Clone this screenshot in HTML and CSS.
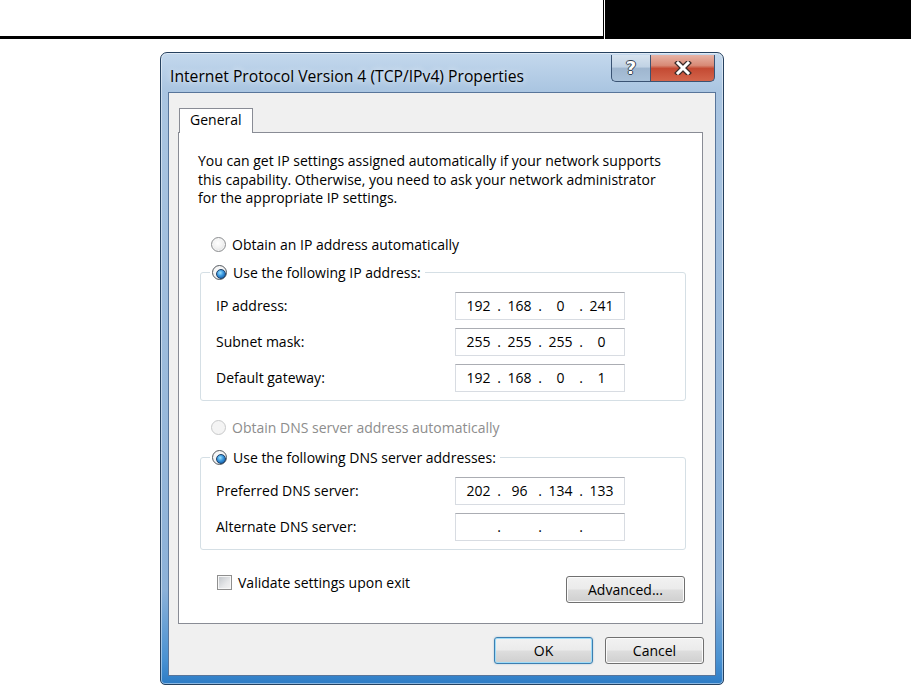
FILE: index.html
```html
<!DOCTYPE html>
<html lang="en">
<head>
    <meta charset="UTF-8">
    <title>Internet Protocol Version 4 (TCP/IPv4) Properties</title>
    <link rel="stylesheet" href="styles.css">
</head>
<body>
    <!-- Page header band of the manual -->
    <div class="doc-head">
        <div class="doc-rule"></div>
        <div class="doc-tab"></div>
    </div>

    <!-- Dialog window -->
    <div class="window">
        <div class="titlebar">
            <span class="title">Internet Protocol Version 4 (TCP/IPv4) Properties</span>
            <div class="caption-btns">
                <span class="cap cap-help">?</span>
                <span class="cap cap-close">
                    <svg width="18" height="14" viewBox="0 0 18 14">
                        <path d="M4 2 L14 12 M14 2 L4 12" stroke="#3a2a28" stroke-width="5.5" stroke-linecap="square"/>
                        <path d="M4 2 L14 12 M14 2 L4 12" stroke="#fff" stroke-width="3" stroke-linecap="square"/>
                    </svg>
                </span>
            </div>
        </div>

        <div class="client">
            <div class="tabs">
                <div class="tab">General</div>
            </div>

            <div class="panel">
                <p class="intro">You can get IP settings assigned automatically if your network supports
                    this capability. Otherwise, you need to ask your network administrator
                    for the appropriate IP settings.</p>

                <label class="option first">
                    <span class="radio"></span>Obtain an IP address automatically
                </label>

                <fieldset class="group group-ip">
                    <legend><span class="radio on"></span>Use the following IP address:</legend>
                    <div class="field-row">
                        <span class="field-label">IP address:</span>
                        <div class="ipbox"><span class="oct">192</span><span class="dot">.</span><span class="oct">168</span><span class="dot">.</span><span class="oct">0</span><span class="dot">.</span><span class="oct">241</span></div>
                    </div>
                    <div class="field-row">
                        <span class="field-label">Subnet mask:</span>
                        <div class="ipbox"><span class="oct">255</span><span class="dot">.</span><span class="oct">255</span><span class="dot">.</span><span class="oct">255</span><span class="dot">.</span><span class="oct">0</span></div>
                    </div>
                    <div class="field-row">
                        <span class="field-label">Default gateway:</span>
                        <div class="ipbox"><span class="oct">192</span><span class="dot">.</span><span class="oct">168</span><span class="dot">.</span><span class="oct">0</span><span class="dot">.</span><span class="oct">1</span></div>
                    </div>
                </fieldset>

                <label class="option disabled">
                    <span class="radio"></span>Obtain DNS server address automatically
                </label>

                <fieldset class="group group-dns">
                    <legend><span class="radio on"></span>Use the following DNS server addresses:</legend>
                    <div class="field-row">
                        <span class="field-label">Preferred DNS server:</span>
                        <div class="ipbox"><span class="oct">202</span><span class="dot">.</span><span class="oct">96</span><span class="dot">.</span><span class="oct">134</span><span class="dot">.</span><span class="oct">133</span></div>
                    </div>
                    <div class="field-row">
                        <span class="field-label">Alternate DNS server:</span>
                        <div class="ipbox"><span class="oct"></span><span class="dot">.</span><span class="oct"></span><span class="dot">.</span><span class="oct"></span><span class="dot">.</span><span class="oct"></span></div>
                    </div>
                </fieldset>

                <div class="panel-foot">
                    <label class="check-row"><span class="checkbox"></span>Validate settings upon exit</label>
                    <button class="btn btn-advanced">Advanced...</button>
                </div>
            </div>

            <!-- Dialog buttons -->
            <div class="dialog-btns">
                <button class="btn btn-default">OK</button>
                <button class="btn">Cancel</button>
            </div>
        </div>
    </div>
</body>
</html>
```

FILE: styles.css
```css
/* Reset */
* {
    box-sizing: border-box;
    margin: 0;
    padding: 0;
}

body {
    font-family: 'Open Sans', 'Noto Sans', sans-serif;
    font-size: 14px;
    color: #000;
    background: #fff;
    overflow: hidden;
}

/* Manual page header */
.doc-head {
    display: flex;
    height: 39px;
}

.doc-rule {
    width: 604px;
    border-right: 1px solid #000;
    border-bottom: 3px solid #000;
}

.doc-tab {
    flex: 1;
    margin-left: 1px;
    background: #000;
}

/* Window frame */
.window {
    width: 564px;
    height: 633px;
    margin: 13px 0 0 160px;
    display: flex;
    flex-direction: column;
    padding: 0 7px 8px;
    border: 1px solid #26415f;
    border-radius: 7px 7px 5px 5px;
    background: linear-gradient(180deg, #c4d8ed 0, #aac5e1 38px, #9dbcdc 45%, #8cb1d8 85%, #4a92d2 96%, #2d7cc6 100%);
    box-shadow: inset 0 0 0 1px rgba(255, 255, 255, 0.45);
}

.titlebar {
    height: 39px;
    display: flex;
    justify-content: space-between;
    align-items: flex-start;
}

.title {
    margin: 13px 0 0 2px;
    font-size: 15.7px;
    line-height: 20px;
    text-shadow: 0 0 6px rgba(255, 255, 255, 0.9);
}

.caption-btns {
    display: flex;
    margin: 2px 1px 0 0;
}

.cap {
    height: 27px;
    display: flex;
    align-items: center;
    justify-content: center;
    border: 1px solid #3a5373;
    border-top: none;
}

.cap-help {
    width: 39px;
    padding-bottom: 1px;
    border-right: none;
    border-radius: 0 0 0 5px;
    background: linear-gradient(180deg, #d7e3ef 0%, #c1d2e4 45%, #9fb6cf 52%, #a9c1d9 100%);
    color: #fff;
    font-family: 'DejaVu Sans', sans-serif;
    font-weight: bold;
    font-size: 18px;
    text-shadow: 1px 0 0 #34404e, -1px 0 0 #34404e, 0 1px 0 #34404e, 0 -1px 0 #34404e;
}

.cap-close {
    width: 65px;
    border-radius: 0 0 5px 0;
    background: linear-gradient(180deg, #e7b3a6 0%, #d88a76 40%, #c44a33 52%, #d3654b 100%);
}

/* Client area */
.client {
    flex: 1;
    display: flex;
    flex-direction: column;
    background: #f0f0f0;
    border: 1px solid #58759a;
}

.tabs {
    display: flex;
    margin: 15px 0 0 10px;
}

.tab {
    position: relative;
    z-index: 1;
    height: 25px;
    margin-bottom: -1px;
    padding: 0 10px;
    line-height: 22px;
    background: #fff;
    border: 1px solid #898c95;
    border-bottom: none;
}

.panel {
    height: 492px;
    margin: 0 12px 0 9px;
    padding: 19px 16px 0 19px;
    background: #fff;
    border: 1px solid #898c95;
}

.intro {
    width: 470px;
    line-height: 18.5px;
}

/* Radio options */
.option {
    display: flex;
    align-items: center;
    gap: 6px;
    height: 18px;
    margin-left: 13px;
}

.option.first {
    margin-top: 28px;
}

.option.disabled {
    margin-top: 18px;
    color: #8d8d8d;
}

.radio {
    position: relative;
    flex: none;
    width: 15px;
    height: 15px;
    border-radius: 50%;
    border: 1px solid #8c8e90;
    background: radial-gradient(circle at 45% 40%, #ffffff 0, #f2f2f2 45%, #d2d4d6 100%);
    box-shadow: inset 0 0 0 1px #f6f6f6;
}

.radio.on {
    border-color: #555a60;
}

.radio.on::after {
    content: "";
    position: absolute;
    left: 2.5px;
    top: 2.5px;
    width: 8px;
    height: 8px;
    border-radius: 50%;
    border: 1px solid #1b3f68;
    background: radial-gradient(circle at 40% 35%, #9be3ff 0, #3693dc 45%, #0e4c8f 100%);
}

.option.disabled .radio {
    border-color: #c8c9ca;
    background: #f4f4f4;
    box-shadow: none;
}

/* Group boxes */
.group {
    margin: 10px 0 0 2px;
    padding: 10px 0 8px;
    border: 1px solid #d5dfe5;
    border-radius: 3px;
}

.group legend {
    display: flex;
    align-items: center;
    gap: 6px;
    height: 18px;
    margin-left: 9px;
    padding: 0 4px 0 2px;
}

.group-dns {
    margin-top: 12px;
}

.field-row {
    display: flex;
    align-items: center;
    height: 28px;
    padding-left: 15px;
}

.field-row + .field-row {
    margin-top: 8px;
}

.field-label {
    width: 239px;
}

.ipbox {
    width: 170px;
    height: 28px;
    display: flex;
    align-items: center;
    padding-left: 6px;
    background: #fff;
    border: 1px solid #d8dce2;
    border-top-color: #abadb3;
}

.oct {
    width: 33px;
    text-align: center;
}

.dot {
    width: 8px;
    text-align: center;
}

/* Panel footer */
.panel-foot {
    display: flex;
    justify-content: space-between;
    align-items: flex-start;
    margin-top: 24px;
}

.check-row {
    display: flex;
    align-items: center;
    gap: 6px;
    height: 18px;
    margin-left: 19px;
}

.checkbox {
    width: 15px;
    height: 15px;
    border: 1px solid #8f8f8f;
    background: linear-gradient(135deg, #bfc3c8 0%, #e6e7e9 60%, #f4f4f4 100%);
    box-shadow: inset 0 0 0 1px #f7f7f7;
}

/* Buttons */
.btn {
    height: 27px;
    font-family: inherit;
    font-size: 14px;
    color: #000;
    border: 1px solid #707070;
    border-radius: 3px;
    background: linear-gradient(180deg, #f2f2f2 0%, #ebebeb 48%, #dddddd 52%, #cfcfcf 100%);
    box-shadow: inset 0 0 0 1px #fbfbfb;
}

.btn-advanced {
    width: 119px;
    margin: 2px 1px 0 0;
}

.dialog-btns {
    display: flex;
    justify-content: flex-end;
    gap: 12px;
    margin: 13px 11px 0 0;
}

.dialog-btns .btn {
    width: 99px;
}

.btn-default {
    border-color: #3c7fb1;
    box-shadow: inset 0 0 0 1px #9fdcf8, 0 0 2px rgba(60, 127, 177, 0.4);
}
```
